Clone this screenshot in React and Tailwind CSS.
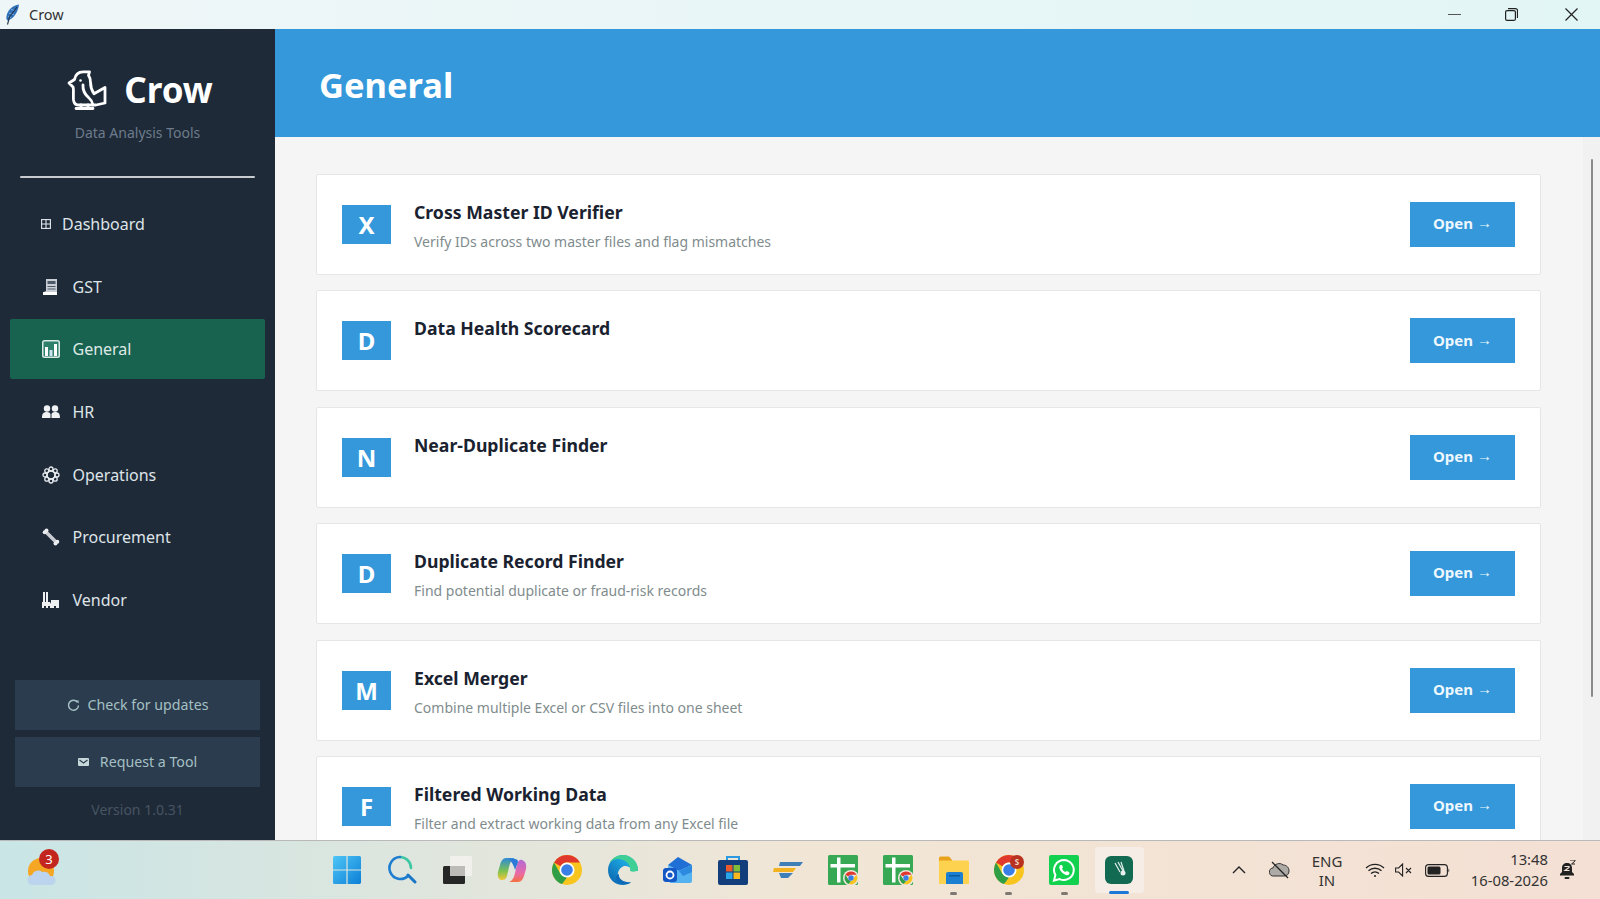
import React from "react";

const Feather = () => (
  <svg width="15" height="21" viewBox="0 0 15 21">
    <path d="M14 .5C8 1 2.500 6 1.500 12c-.4 2 .1 3.500.8 4.500C8 15.500 13 9 14 .5z" fill="#2f72ba" />
    <path d="M6 5.500 10 6.500M4 9l5 1.500M3 12.500l3 1" stroke="#9cc4ea" strokeWidth=".7" />
    <path d="M12 3 4.500 13 2.500 20.500" fill="none" stroke="#22344a" strokeWidth="1.100" />
  </svg>
);

const Bird = () => (
  <svg width="40" height="40" viewBox="0 0 40 40" fill="none" stroke="#fff" strokeWidth="2.800" strokeLinejoin="round" strokeLinecap="round">
    <path d="M2 13 7.500 9.500C8.500 4 12 1.800 16 1.800h6.500l-1 3.500c1.500 2 2 4.500 2 7 0 4.500 1.500 8.500 3.500 11.500l11-6.300V33l-9 2H11c-2.500 0-4-2-4.500-5C6 25 7 19 6 17z" />
    <path d="M16 15c-.5 6 2.500 10 6 13 2.500 2 3.500 4.500 4 7" />
    <path d="M14 35v3.200M21 35v3.200M9 38.500h17" />
    <circle cx="13.500" cy="10.500" r="1.300" fill="#fff" stroke="none" />
  </svg>
);

const IGrid = () => (
  <svg width="10" height="10" viewBox="0 0 10 10" fill="none" stroke="#e5e9ee" strokeWidth="1.100">
    <rect x=".6" y=".6" width="8.800" height="8.800" />
    <path d="M.6 5h8.800M5 .6v8.800" />
  </svg>
);
const IBook = () => (
  <svg width="18" height="18" viewBox="0 0 18 18">
    <path d="M4 1h11v14H2v-1l2-1z" fill="#c9ced4" />
    <path d="M5.500 3h8v3h-8zM5.500 8h8v1h-8zM5.500 10.500h8v1h-8z" fill="#4f5a68" />
    <path d="M1 14h14v3H1z" fill="#fff" />
  </svg>
);
const IChart = () => (
  <svg width="18" height="18" viewBox="0 0 18 18">
    <rect width="18" height="18" rx="2.500" fill="#dbe8e4" />
    <rect x="1.500" y="1.500" width="15" height="15" rx="1" fill="#2f806b" />
    <path d="M3 7h3v9H3z" fill="#fff" />
    <path d="M7.500 10h3v6h-3z" fill="#cfe0f2" />
    <path d="M12 4h3v12h-3z" fill="#fff" />
  </svg>
);
const IPeople = () => (
  <svg width="18" height="14" viewBox="0 0 18 14" fill="#f0f2f4">
    <circle cx="5" cy="3.500" r="3.200" />
    <circle cx="13" cy="3.500" r="3.200" />
    <path d="M0 13c0-4 1-6 5-6 2 0 3 .7 3.500 2v4zM9.500 9c.5-1.300 1.500-2 3.500-2 4 0 5 2 5 6H9.500z" />
  </svg>
);
const IFlower = () => (
  <svg width="18" height="18" viewBox="0 0 18 18" fill="none" stroke="#e5e9ee">
    <circle cx="9" cy="9" r="4" strokeWidth="1.600" />
    <circle cx="9" cy="3" r="2" strokeWidth="1.300" />
    <circle cx="9" cy="15" r="2" strokeWidth="1.300" />
    <circle cx="3" cy="9" r="2" strokeWidth="1.300" />
    <circle cx="15" cy="9" r="2" strokeWidth="1.300" />
    <circle cx="4.800" cy="4.800" r="2" strokeWidth="1.300" />
    <circle cx="13.200" cy="4.800" r="2" strokeWidth="1.300" />
    <circle cx="4.800" cy="13.200" r="2" strokeWidth="1.300" />
    <circle cx="13.200" cy="13.200" r="2" strokeWidth="1.300" />
  </svg>
);
const IWrench = () => (
  <svg width="18" height="18" viewBox="0 0 18 18">
    <path d="M4 4l10 10" stroke="#c9cdd2" strokeWidth="3.600" />
    <circle cx="2.700" cy="4.300" r="2" fill="#eceef0" />
    <circle cx="4.500" cy="2.500" r="2" fill="#eceef0" />
    <circle cx="15.300" cy="13.700" r="2" fill="#eceef0" />
    <circle cx="13.500" cy="15.500" r="2" fill="#eceef0" />
  </svg>
);
const IFactory = () => (
  <svg width="18" height="17" viewBox="0 0 18 17" fill="#eef0f2">
    <path d="M1 0h2v10H1zM4 0h2v10H4z" />
    <path d="M0 16v-6h8l1 2V8h8v8h-3v-2h-2v2H8v-2H6v2H4v-2H2v2z" />
  </svg>
);
const IRefresh = () => (
  <svg width="13" height="13" viewBox="0 0 13 13" fill="none" stroke="#a5c0c4" strokeWidth="1.500">
    <path d="M10.500 3.200A5 5 0 1 0 11.500 6.500" />
    <path d="M8.500 1.500h3.200v3z" fill="#a5c0c4" stroke="none" />
  </svg>
);
const IMail = () => (
  <svg width="11" height="8" viewBox="0 0 11 8">
    <rect width="11" height="8" rx="1" fill="#c6d8da" />
    <path d="M1.500 2 5.500 5 9.500 2" stroke="#2c3d50" strokeWidth="1.200" fill="none" />
  </svg>
);

const nav = [
  { label: "GST", icon: <IBook /> },
  { label: "General", icon: <IChart />, active: true },
  { label: "HR", icon: <IPeople /> },
  { label: "Operations", icon: <IFlower /> },
  { label: "Procurement", icon: <IWrench /> },
  { label: "Vendor", icon: <IFactory /> },
];

const cards = [
  ["X", "Cross Master ID Verifier", "Verify IDs across two master files and flag mismatches"],
  ["D", "Data Health Scorecard", ""],
  ["N", "Near-Duplicate Finder", ""],
  ["D", "Duplicate Record Finder", "Find potential duplicate or fraud-risk records"],
  ["M", "Excel Merger", "Combine multiple Excel or CSV files into one sheet"],
  ["F", "Filtered Working Data", "Filter and extract working data from any Excel file"],
];

const Card = ({ letter, title, desc }) => (
  <div className="flex h-[101px] shrink-0 items-center rounded-[2px] border border-[#e6e6e6] bg-white pl-[25px] pr-[25px]">
    <div className="flex h-[39px] w-[49px] items-center justify-center bg-[#3498db] pt-[1px] text-[24px] font-bold text-white">{letter}</div>
    <div className="ml-[23px] flex-1 self-start pt-[23px]">
      <div className="text-[17.650px] font-bold leading-[28px] text-[#1a2230]">{title}</div>
      <div className="mt-[5px] h-[22px] text-[14px] leading-[22px] text-[#7f8c8d]">{desc}</div>
    </div>
    <div className="flex h-[45px] w-[105px] items-center justify-center gap-[4px] bg-[#3498db] pb-[2px] text-[15px] font-bold text-[#eef7fd]">
      Open <span className="font-['Liberation_Sans',sans-serif] text-[15px]">→</span>
    </div>
  </div>
);

const Windows = () => (
  <svg width="30" height="30" viewBox="0 0 30 30">
    <defs>
      <linearGradient id="win" x1="0" y1="0" x2="1" y2="1">
        <stop offset="0" stopColor="#4fc6f7" />
        <stop offset="1" stopColor="#0c7fd6" />
      </linearGradient>
    </defs>
    <path d="M1 2.500A1.500 1.500 0 0 1 2.500 1H14.400V14.400H1zM15.600 1h12a1.500 1.500 0 0 1 1.400 1.500V14.400H15.600zM1 15.600h13.400V29H2.500A1.500 1.500 0 0 1 1 27.500zM15.600 15.600H29v11.900a1.500 1.500 0 0 1-1.400 1.500h-12z" fill="url(#win)" />
  </svg>
);
const Search = () => (
  <svg width="30" height="30" viewBox="0 0 30 30" fill="none" strokeWidth="2.600" strokeLinecap="round">
    <path d="M24 13A11 11 0 0 0 13 2" stroke="#3fc7a4" />
    <path d="M13 2A11 11 0 1 0 21 21" stroke="#1d7ed0" />
    <path d="M21 20l7 7" stroke="#1a76c9" strokeWidth="3" />
  </svg>
);
const TaskView = () => (
  <svg width="30" height="30" viewBox="0 0 30 30">
    <rect x="1" y="11" width="22" height="18" rx="1.500" fill="#262626" />
    <rect x="8" y="1" width="22" height="20" rx="1.500" fill="#f4f1ee" fillOpacity=".9" />
    <rect x="8" y="11" width="15" height="10" fill="#bdbbb8" />
  </svg>
);
const Copilot = () => (
  <svg width="30" height="30" viewBox="0 0 30 30">
    <defs>
      <linearGradient id="co1" x1="0" y1="0" x2="0" y2="1">
        <stop offset="0" stopColor="#2d8ad8" />
        <stop offset=".6" stopColor="#7fc24d" />
        <stop offset="1" stopColor="#f2c63a" />
      </linearGradient>
      <linearGradient id="co2" x1="0" y1="0" x2="0" y2="1">
        <stop offset="0" stopColor="#b26ad6" />
        <stop offset=".6" stopColor="#e86aa8" />
        <stop offset="1" stopColor="#f5703e" />
      </linearGradient>
    </defs>
    <path d="M9 3h9c-3 1-5 4-6 9l-2 9c-1 3-3 4-5 4-3 0-5-3-4-8l2-7C4 6 6 3 9 3z" fill="url(#co1)" />
    <path d="M21 27h-9c3-1 5-4 6-9l2-9c1-3 3-5 5-4 3 1 5 4 4 9l-2 7c-1 3-3 6-6 6z" fill="url(#co2)" />
    <path d="M12 4h6c2 0 3 1 3 3l-3 8c-1-4-3-8-6-11z" fill="#2c7ad8" />
  </svg>
);
const ChromeLogo = ({ badge }) => (
  <span className="relative block h-[30px] w-[30px]">
    <svg width="30" height="30" viewBox="0 0 30 30">
      <circle cx="15" cy="15" r="15" fill="#f7c51e" />
      <path d="M15 0A15 15 0 0 1 28 7.500H15A7.500 7.500 0 0 0 8.500 11.300L2 7.500A15 15 0 0 1 15 0z" fill="#e0382d" />
      <path d="M2 7.500 8.500 19 15 22.500 10 29.100A15 15 0 0 1 2 7.500z" fill="#2f9e46" />
      <circle cx="15" cy="15" r="7.500" fill="#fff" />
      <circle cx="15" cy="15" r="5.800" fill="#3a7fe8" />
    </svg>
    {badge && (
      <span className="absolute right-0 top-0 flex h-[14px] w-[14px] items-center justify-center rounded-full bg-[#b9321f] text-[8px] font-bold text-[#f3d6c8]">S</span>
    )}
  </span>
);
const Edge = () => (
  <svg width="30" height="30" viewBox="0 0 30 30">
    <defs>
      <linearGradient id="edge" x1="0" y1="1" x2="1" y2="0">
        <stop offset="0" stopColor="#0b5fa8" />
        <stop offset=".6" stopColor="#1aa0dc" />
        <stop offset="1" stopColor="#2bc4d8" />
      </linearGradient>
    </defs>
    <path d="M15 0C7 0 0 7 0 15c0 9 7 15 15 15 3 0 6-1 8-2.500-5 1.500-11 0-12.500-4.500C9 19 10 14 15 11.500 17 10.500 22 11 24 15l6 1v-1C30 7 23 0 15 0z" fill="url(#edge)" />
    <path d="M30 15C30 7 23 0 15 0 9 0 4 3 1.500 8 5 4 10 3 15 5c5 2 8 6 7 11 3 1 6 1 8-1z" fill="#3fcf95" />
    <path d="M11 19c-1 5 5 9 12 8-3 2.500-9 3.500-13 0-3-3-2.500-7 1-8z" fill="#0d6ab8" />
  </svg>
);
const Outlook = () => (
  <svg width="30" height="28" viewBox="0 0 30 28">
    <path d="M15 1 29 9 16 15 5 9z" fill="#1f6fd6" />
    <path d="M5 9 16 15 29 9V25a2 2 0 0 1-2 2H7z" fill="#55b2f0" />
    <path d="M16 15 29 9V16L20 20z" fill="#2b8ae0" />
    <rect x="0" y="12" width="14" height="14" rx="3" fill="#1358c4" />
    <circle cx="7" cy="19" r="3.500" fill="none" stroke="#fff" strokeWidth="1.800" />
  </svg>
);
const Store = () => (
  <svg width="30" height="30" viewBox="0 0 30 30">
    <path d="M9 5V2h12v3" fill="none" stroke="#2b9ae0" strokeWidth="2" />
    <rect x="0" y="5" width="30" height="25" rx="2" fill="#123f7c" />
    <rect x="8" y="10" width="6.500" height="6.500" fill="#ea5a2a" />
    <rect x="15.500" y="10" width="6.500" height="6.500" fill="#7fbd3a" />
    <rect x="8" y="17.500" width="6.500" height="6.500" fill="#2ba5ea" />
    <rect x="15.500" y="17.500" width="6.500" height="6.500" fill="#f7b91e" />
  </svg>
);
const Sublime = () => (
  <svg width="30" height="16" viewBox="0 0 30 16">
    <path d="M7 0h23l-3 4H6z" fill="#3f7fb8" />
    <path d="M1 6h22l-3 4H0z" fill="#f3b21f" />
    <path d="M6 11h14l-5 5H8z" fill="#3f7fb8" />
  </svg>
);
const Sheets = () => (
  <span className="relative block h-[30px] w-[30px]">
    <svg width="30" height="30" viewBox="0 0 30 30">
      <rect width="30" height="30" rx="1.500" fill="#37a853" />
      <path d="M9 2.500h3.500V9H27v3.500H12.500V27.500H9V12.500H2.500V9H9z" fill="#fff" />
    </svg>
    <span className="absolute -bottom-[1px] -right-[1px] block h-[16px] w-[16px]">
      <svg width="16" height="16" viewBox="0 0 30 30">
        <circle cx="15" cy="15" r="15" fill="#f0e6dc" />
        <path d="M15 3A12 12 0 0 1 25.400 9H15a6 6 0 0 0-5 3L4.600 9A12 12 0 0 1 15 3z" fill="#e0382d" />
        <path d="M4.600 9A12 12 0 0 0 11 26.300L15 21l-5-3z" fill="#2f9e46" />
        <path d="M25.400 9A12 12 0 0 1 11 26.300L15 21a6 6 0 0 0 5-6z" fill="#f7c51e" />
        <circle cx="15" cy="15" r="5" fill="#3a7fe8" />
      </svg>
    </span>
  </span>
);
const Folder = () => (
  <svg width="30" height="28" viewBox="0 0 30 28">
    <path d="M0 2a1.500 1.500 0 0 1 1.500-1.500H10l3 3.500v4H0z" fill="#e9a31a" />
    <rect x="0" y="4.500" width="30" height="23.500" rx="1" fill="#fcd24f" />
    <path d="M7 18a2 2 0 0 1 2-2h13a2 2 0 0 1 2 2v10H7z" fill="#1c7fd0" />
    <rect x="10" y="19" width="11" height="1.500" fill="#0e5a9e" />
  </svg>
);
const WhatsApp = () => (
  <svg width="30" height="30" viewBox="0 0 30 30">
    <rect width="30" height="30" rx="2" fill="#12d14f" />
    <path d="M15 5a10 10 0 0 0-8.600 15L5 25.500l5.600-1.400A10 10 0 1 0 15 5z" fill="none" stroke="#fff" strokeWidth="2" />
    <path d="M11.500 10c-1 .5-1.500 2-1 3.500 1 3 3.500 5.500 6.500 6.500 1.500.5 3 0 3.500-1.500l-.5-1.500-2.500-1-1 1c-1.500-.5-3-2-3.500-3.500l1-1L13 10z" fill="#fff" />
  </svg>
);
const CrowApp = () => (
  <svg width="28" height="28" viewBox="0 0 28 28">
    <rect width="28" height="28" rx="6" fill="#126a52" />
    <path d="M10 7l5 9M13 6l5 9M16 6l3 9" stroke="#e5efec" strokeWidth="1.200" fill="none" />
    <circle cx="18" cy="17" r="2.500" fill="#e5efec" />
  </svg>
);

const Tray = ({ children }) => <span className="flex items-center justify-center">{children}</span>;

const apps = [
  { el: <Windows /> },
  { el: <Search /> },
  { el: <TaskView /> },
  { el: <Copilot /> },
  { el: <ChromeLogo /> },
  { el: <Edge /> },
  { el: <Outlook /> },
  { el: <Store /> },
  { el: <Sublime /> },
  { el: <Sheets /> },
  { el: <Sheets /> },
  { el: <Folder />, dot: true },
  { el: <ChromeLogo badge />, dot: true },
  { el: <WhatsApp />, dot: true },
  { el: <CrowApp />, active: true },
];

export default function App() {
  return (
    <div className="flex h-[899px] w-[1600px] flex-col overflow-hidden font-['Noto_Sans',sans-serif]">
      {/* Title bar */}
      <div className="flex h-[29px] shrink-0 items-center bg-gradient-to-r from-[#eff6f8] to-[#e2f6f5] pl-[5px]">
        <Feather />
        <span className="ml-[9px] text-[14.500px] text-[#333]">Crow</span>
        <div className="ml-auto flex items-center">
          <span className="h-[1px] w-[13px] bg-[#555]" />
          <svg className="ml-[44px]" width="13" height="13" viewBox="0 0 13 13" fill="none" stroke="#222" strokeWidth="1.200">
            <rect x=".6" y="2.600" width="9.800" height="9.800" rx="1.500" />
            <path d="M3 .6h7.500a2 2 0 0 1 2 2V10" />
          </svg>
          <svg className="ml-[47px] mr-[22px]" width="13" height="13" viewBox="0 0 13 13" stroke="#222" strokeWidth="1.200">
            <path d="M.5.5l12 12M12.500.5l-12 12" />
          </svg>
        </div>
      </div>

      <div className="flex h-[812px] shrink-0 border-b border-[#b9b9b9]">
        {/* Sidebar */}
        <aside className="flex w-[275px] shrink-0 flex-col bg-[#1e2a38]">
          <div className="mt-[41px] flex items-center justify-center gap-[17px] pl-[5px]">
            <Bird />
            <span className="text-[35px] font-bold leading-[40px] text-white">Crow</span>
          </div>
          <div className="mt-[13px] text-center text-[14px] leading-[20px] text-[#6d7b8b]">Data Analysis Tools</div>
          <div className="mx-[20px] mt-[33px] h-[2px] rounded-full bg-[#c8ccd0]" />

          <nav className="mt-[16px] flex flex-col gap-[2.700px] px-[10px]">
            <div className="flex h-[60px] items-center pl-[31px] text-[16px] text-[#dfe4e8]">
              <IGrid />
              <span className="ml-[11px]">Dashboard</span>
            </div>
            {nav.map((n) => (
              <div
                key={n.label}
                className={
                  n.active
                    ? "flex h-[60px] items-center rounded-[2px] bg-[#17634f] pl-[32px] text-[16px] text-[#dfe9e6]"
                    : "flex h-[60px] items-center pl-[32px] text-[16px] text-[#dfe4e8]"
                }
              >
                <span className="flex w-[18px] justify-center">{n.icon}</span>
                <span className="ml-[12.500px]">{n.label}</span>
              </div>
            ))}
          </nav>

          <div className="mt-auto flex flex-col gap-[7px] px-[15px]">
            <div className="flex h-[50px] items-center justify-center gap-[8px] bg-[#2b3c4e] text-[14.200px] text-[#a5c0c4]">
              <IRefresh />
              Check for updates
            </div>
            <div className="flex h-[50px] items-center justify-center gap-[11px] bg-[#2b3c4e] text-[14.200px] text-[#a5c0c4]">
              <IMail />
              Request a Tool
            </div>
          </div>
          <div className="mb-[20px] mt-[13px] text-center text-[14px] leading-[20px] text-[#475462]">Version 1.0.31</div>
        </aside>

        {/* Main */}
        <main className="flex min-w-0 flex-1 flex-col bg-[#f5f5f5]">
          <header className="flex h-[108px] shrink-0 items-center bg-[#3498db] pl-[44px] pt-[3px] text-[34.500px] font-bold text-white">
            General
          </header>
          <div className="flex min-h-0 flex-1">
            <div className="flex min-w-0 flex-1 flex-col gap-[15.400px] overflow-hidden pl-[41px] pr-[42px] pt-[37px]">
              {cards.map((c, i) => (
                <Card key={i} letter={c[0]} title={c[1]} desc={c[2]} />
              ))}
            </div>
            <div className="w-[17px] shrink-0 bg-[#f1f1f1] pl-[8px] pt-[22px]">
              <div className="h-[538px] w-[2px] rounded-full bg-[#8a8a8a]" />
            </div>
          </div>
        </main>
      </div>

      {/* Taskbar */}
      <div className="relative flex min-h-0 flex-1 items-center bg-gradient-to-r from-[#c9e5e6] via-[#f1e6d6] to-[#f4e0d4]">
        <span className="relative ml-[27px] block h-[32px] w-[30px]">
          <svg className="absolute bottom-0 left-0" width="30" height="28" viewBox="0 0 30 28">
            <circle cx="14" cy="13" r="13" fill="#f5a623" />
            <path d="M6 27a5 5 0 0 1-1-10c1-4 7-6 10-3 3-1 7 0 8 4a4.500 4.500 0 0 1 2 9z" fill="#bcd4ee" />
          </svg>
          <span className="absolute -right-[2px] -top-[5px] flex h-[20px] w-[20px] items-center justify-center rounded-full bg-[#c2261f] text-[13px] leading-none text-white">3</span>
        </span>

        <div className="ml-[262px] flex items-center">
          {apps.map((a, i) => (
            <div key={i} className="relative flex h-[46px] w-[55.200px] items-center justify-center">
              {a.active && <span className="absolute inset-x-[3px] inset-y-0 rounded-[4px] bg-[#f6ede6]" />}
              <span className="relative">{a.el}</span>
              {a.dot && <span className="absolute -bottom-[2px] h-[3px] w-[7px] rounded-full bg-[#7d7872]" />}
              {a.active && <span className="absolute -bottom-[1px] h-[3px] w-[20px] rounded-full bg-[#1a78d6]" />}
            </div>
          ))}
        </div>

        <div className="ml-auto flex items-center text-[#222]">
          <Tray>
            <svg width="14" height="8" viewBox="0 0 14 8" fill="none" stroke="#222" strokeWidth="1.400"><path d="M1 7l6-6 6 6" /></svg>
          </Tray>
          <Tray>
            <svg className="ml-[23px]" width="22" height="20" viewBox="0 0 22 20">
              <path d="M5 16a4 4 0 0 1-1-8c1-4 7-6 10-3 4 0 6 3 6 6 0 3-2 5-5 5z" fill="#aeaaa5" stroke="#333" strokeWidth="1" />
              <path d="M3 2l16 16" stroke="#222" strokeWidth="1.300" />
            </svg>
          </Tray>
          <div className="ml-[18px] flex w-[36px] flex-col items-center pt-[1px] text-[15px] leading-[19px] text-[#333]">
            <span>ENG</span>
            <span>IN</span>
          </div>
          <Tray>
            <svg className="ml-[20px]" width="20" height="15" viewBox="0 0 20 15" fill="none" stroke="#222" strokeWidth="1.300">
              <path d="M1 5a13 13 0 0 1 18 0M3.500 7.800a9.500 9.500 0 0 1 13 0M6 10.500a6 6 0 0 1 8 0" />
              <circle cx="10" cy="13" r="1" fill="#222" stroke="none" />
            </svg>
          </Tray>
          <Tray>
            <svg className="ml-[10px]" width="18" height="14" viewBox="0 0 18 14" fill="none" stroke="#222" strokeWidth="1.100">
              <path d="M.6 5v4h3l4 4V1l-4 4zM11 5l5 5M16 5l-5 5" />
            </svg>
          </Tray>
          <Tray>
            <svg className="ml-[12px]" width="25" height="13" viewBox="0 0 25 13">
              <rect x=".6" y=".6" width="21.800" height="11.800" rx="3" fill="none" stroke="#222" strokeWidth="1.100" />
              <rect x="2.500" y="2.500" width="13" height="8" rx="1.500" fill="#222" />
              <path d="M23.500 4.500c1 .5 1 3.500 0 4z" fill="#222" />
            </svg>
          </Tray>
          <div className="ml-[18px] flex w-[80px] flex-col items-end text-[14.800px] leading-[21px] text-[#333]">
            <span>13:48</span>
            <span>16-08-2026</span>
          </div>
          <Tray>
            <svg className="ml-[11px] mr-[24px]" width="17" height="20" viewBox="0 0 17 20">
              <path d="M8 3c-3 0-5 2-5 5v4l-2 2v1.500h14V14l-2-2V8c0-3-2-5-5-5z" fill="#222" />
              <rect x="5.500" y="17" width="5" height="2" rx="1" fill="#222" />
              <path d="M11 0h5v1l-3.500 3H16" fill="none" stroke="#222" strokeWidth="1" />
              <path d="M5.500 6.500h4.500v1L6 10.500h4.500" fill="none" stroke="#f3e2d7" strokeWidth="1.200" />
            </svg>
          </Tray>
        </div>
      </div>
    </div>
  );
}
